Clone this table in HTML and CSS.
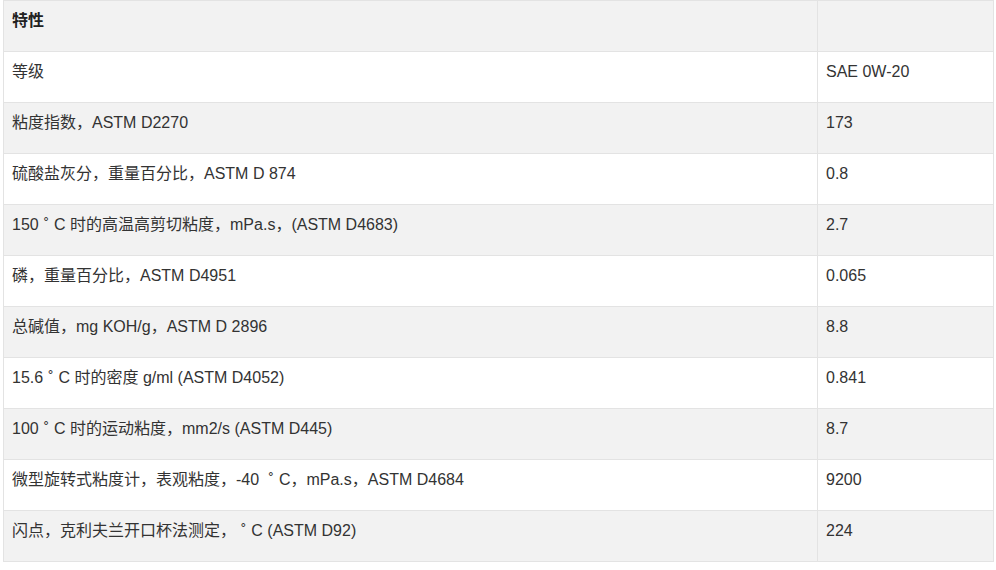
FILE: index.html
```html
<!DOCTYPE html>
<html lang="zh-CN">
<head>
<meta charset="utf-8">
<link rel="stylesheet" href="styles.css">
</head>
<body>
<div class="wrap">
<table class="spec">
  <colgroup><col class="c1"><col class="c2"></colgroup>
  <thead>
    <tr><th>特性</th><th></th></tr>
  </thead>
  <tbody>
    <tr><td>等级</td><td>SAE 0W-20</td></tr>
    <tr><td>粘度指数，ASTM D2270</td><td>173</td></tr>
    <tr><td>硫酸盐灰分，重量百分比，ASTM D 874</td><td>0.8</td></tr>
    <tr><td>150<span class="deg">˚</span>C 时的高温高剪切粘度，mPa.s，(ASTM D4683)</td><td>2.7</td></tr>
    <tr><td>磷，重量百分比，ASTM D4951</td><td>0.065</td></tr>
    <tr><td>总碱值，mg KOH/g，ASTM D 2896</td><td>8.8</td></tr>
    <tr><td>15.6<span class="deg">˚</span>C 时的密度 g/ml (ASTM D4052)</td><td>0.841</td></tr>
    <tr><td>100<span class="deg">˚</span>C 时的运动粘度，mm2/s (ASTM D445)</td><td>8.7</td></tr>
    <tr><td>微型旋转式粘度计，表观粘度，-40 <span class="deg">˚</span>C，mPa.s，ASTM D4684</td><td>9200</td></tr>
    <tr><td>闪点，克利夫兰开口杯法测定，<span class="deg">˚</span>C (ASTM D92)</td><td>224</td></tr>
  </tbody>
</table>
</div>
</body>
</html>
```
FILE: styles.css
```css
html, body {
  margin: 0;
  padding: 0;
  background: #ffffff;
}
.wrap {
  padding: 0 4px 0 3px;
}
.spec {
  width: 990px;
  border-collapse: collapse;
  font-family: "Liberation Sans", Arial, "Noto Sans CJK SC", sans-serif;
  font-size: 16px;
  color: #333333;
  table-layout: fixed;
}
.c1 { width: 814px; }
.c2 { width: 176px; }
.spec th,
.spec td {
  border: 1px solid #e3e3e3;
  padding: 8px 8px 18px 8px;
  line-height: 24px;
  height: 24px;
  text-align: left;
  vertical-align: top;
}
.spec th {
  font-weight: bold;
  color: #222222;
  background: #f2f2f2;
}
.spec tbody tr:nth-child(even) td {
  background: #f2f2f2;
}
.spec tbody tr:nth-child(odd) td {
  background: #ffffff;
}
.deg {
  margin: 0 5px;
}
```
